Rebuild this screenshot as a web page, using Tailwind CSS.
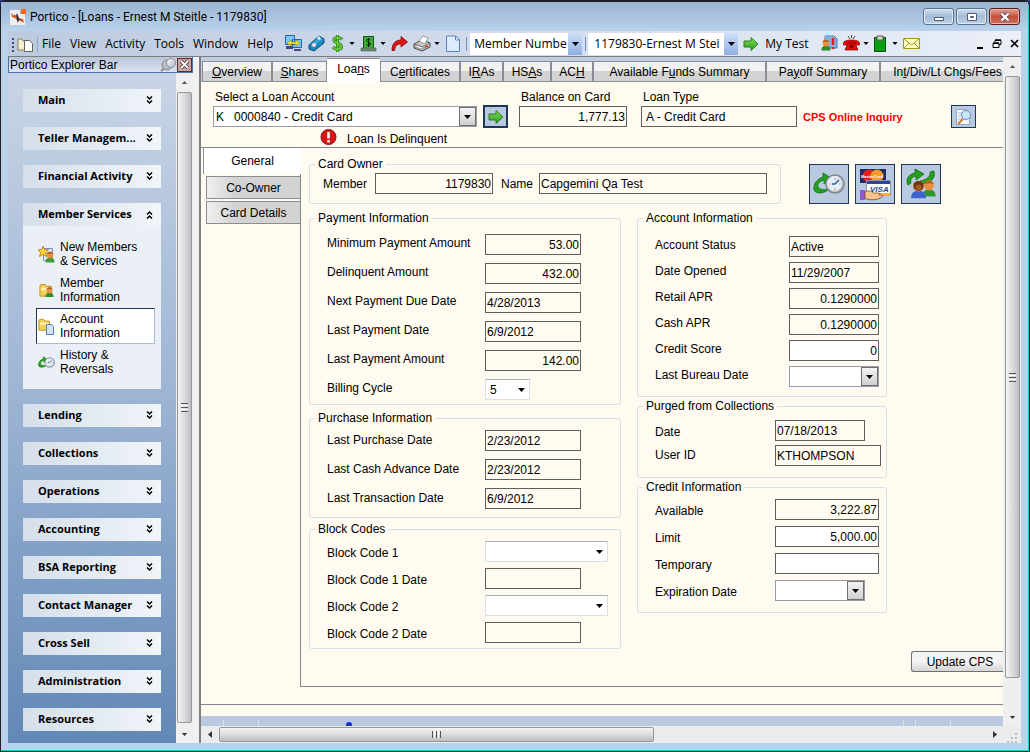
<!DOCTYPE html>
<html lang="en">
<head>
  <meta charset="UTF-8" />
  <meta name="viewport" content="width=device-width, initial-scale=1.0"/>
  <title>Portico - [Loans - Ernest M Steitle - 1179830]</title>
  <script src="https://cdn.jsdelivr.net/npm/@tailwindcss/browser@4"></script>
</head>
<body class="h-screen overflow-hidden bg-[#2b3580] font-['Liberation_Sans',Arial,sans-serif] text-xs text-black">

  <!-- Shared icons -->
  <svg class="absolute h-0 w-0">
    <defs>
      <linearGradient id="green" x1="0" y1="0" x2="0" y2="1"><stop offset="0" stop-color="#8be05a"/><stop offset="1" stop-color="#1f9a1c"/></linearGradient>
      <linearGradient id="face" x1="0" y1="0" x2="1" y2="1"><stop offset="0" stop-color="#fff"/><stop offset="1" stop-color="#a9b4bf"/></linearGradient>
    </defs>
    <symbol id="down" viewBox="0 0 7 4"><path d="M0 0h7L3.500 4z"/></symbol>
    <symbol id="chevrons" viewBox="0 0 7 9"><path d="M1 0.500l2.500 2.500L6 0.500M1 4.500l2.500 2.500L6 4.500" fill="none" stroke="#000" stroke-width="1.500"/></symbol>
    <symbol id="go" viewBox="0 0 16 16"><path d="M1 5h7V1.500l7 6.500-7 6.500V11H1z" fill="url(#green)" stroke="#2c7d22"/></symbol>
    <symbol id="person" viewBox="0 0 12 14"><path d="M0.500 13.500c0-4 2-5.500 5.500-5.500s5.500 1.500 5.500 5.500z"/><circle cx="6" cy="4.500" r="4" fill="#e8913c"/><path d="M2 3.500C3 0 9 0 10 3.500 8 2.500 4 2.500 2 3.500z" fill="#a8581c"/></symbol>
    <symbol id="folder" viewBox="0 0 16 16"><path d="M1 3.500V14h12V3.500H8L6.500 1.500H2z" fill="#f3cf57" stroke="#b98d1f"/><path d="M2 5h10v3H2z" fill="#fdf0a8"/></symbol>
    <symbol id="reversal" viewBox="0 0 32 24"><path d="M1 18C0 12 4 7 10 5V1l8 5-7 6V8c-4 1-7 4-6 7 2 3 6 3 11 2-3 4-13 6-15 1z" fill="#23a01f" stroke="#116b12" stroke-width=".8"/><circle cx="22" cy="12" r="9" fill="url(#face)" stroke="#7a8791" stroke-width="1.500"/><circle cx="22" cy="12" r="6.500" fill="#e4f0f8"/><path d="M22 6.500v1.500M22 16v1.500M16.500 12h1.500M26 12h1.500" stroke="#e07a50" stroke-width="1.200"/><path d="M22 12l4-4M22 12h-3" stroke="#245f96" stroke-width="1.500"/></symbol>
  </svg>

  <div class="flex h-full flex-col rounded-t-md border border-t-2 border-[#1d1f24] bg-[#b9d1ea]">
    <div class="flex min-h-0 flex-1 flex-col rounded-t-md border-r border-b border-[#1fc8e0]">

      <!-- Title bar -->
      <header class="flex h-[29px] shrink-0 items-center bg-linear-to-b from-[#99b4d1] to-[#bad2eb] pr-2 pl-2">
        <svg class="mr-1 ml-px h-4 w-4" viewBox="0 0 16 16"><path d="M0 1h10v4h5v11H0z" fill="#f1efec"/><path d="M3 5l3 2 1-3 2 5 4 4-4-2-1 3-2-5z" fill="#2e2e38"/><path d="M1 4l3 3 2-1 1 4-5-2zM9 9l4 1 1 4-3-2z" fill="#e2571e"/><path d="M11 0h5v5h-5z" fill="#ff6a00"/></svg>
        <h1 class="flex-1 font-[Roboto,sans-serif]">Portico - [Loans - Ernest M Steitle - 1179830]</h1>
        <div class="flex gap-[2px]">
          <button aria-label="Minimize" class="flex h-[17px] w-[31px] items-center justify-center rounded-[3px] border border-[#5b7491] bg-linear-to-b from-[#cfdeee] via-[#a5bcd6] to-[#bdd2e8] shadow-[inset_0_0_0_1px_#dfeaf5]">
            <svg class="h-4 w-4" viewBox="0 0 16 16"><path d="M3.500 8.500h9v3h-9z" fill="#fff" stroke="#53596b"/></svg>
          </button>
          <button aria-label="Maximize" class="flex h-[17px] w-[31px] items-center justify-center rounded-[3px] border border-[#5b7491] bg-linear-to-b from-[#cfdeee] via-[#a5bcd6] to-[#bdd2e8] shadow-[inset_0_0_0_1px_#dfeaf5]">
            <svg class="h-4 w-4" viewBox="0 0 16 16"><path d="M3.500 4.500h9v7h-9z" fill="#fff" stroke="#53596b"/><path d="M6.500 7.500h3v1h-3z" fill="#a5bcd6" stroke="#53596b"/></svg>
          </button>
          <button aria-label="Close" class="flex h-[17px] w-[31px] items-center justify-center rounded-[3px] border border-[#5a1e1a] bg-linear-to-b from-[#e0a398] via-[#c4503b] to-[#d0705a] shadow-[inset_0_0_0_1px_#e6b3aa]">
            <svg class="h-4 w-4" viewBox="0 0 16 16"><path d="M4.500 4.500l7 7M11.500 4.500l-7 7" stroke="#53596b" stroke-width="4"/><path d="M4.500 4.500l7 7M11.500 4.500l-7 7" stroke="#fff" stroke-width="2.200"/></svg>
          </button>
        </div>
      </header>

      <div class="mx-[7px] mb-[7px] flex min-h-0 flex-1 flex-col bg-[#f0f0f0]">

        <!-- Menu and toolbar -->
        <nav class="flex h-[26px] shrink-0 items-center border-b border-[#7c7c7c] bg-linear-to-r from-[#bccae0] to-[#eaeff8] pl-[3px] font-['Open_Sans',sans-serif] whitespace-nowrap">
          <svg class="h-4 w-7" viewBox="0 0 28 16"><path d="M1 2h2v2H1zM1 6h2v2H1zM1 10h2v2H1zM1 14h2v2H1z" fill="#31507f"/><path d="M7 3h4l1 2h4v9H7z" fill="#f4edd2" stroke="#8c8157"/><path d="M13.500 4.500h5l3 3v8h-8z" fill="#fff" stroke="#66625a"/><path d="M26.500 0v16" stroke="#8fa9cf"/></svg>
          <div class="flex gap-[9px] pl-[3px]">
            <button>File</button>
            <button>View</button>
            <button>Activity</button>
            <button>Tools</button>
            <button>Window</button>
            <button>Help</button>
          </div>
          <div class="flex items-center gap-[6px] pl-3">
            <button aria-label="Workstations"><svg class="h-[17px] w-[17px]" viewBox="0 0 17 17"><path d="M0.500 0.500h9v9h-9zM7.500 4.500h9v8h-9z" fill="#76c8f7" stroke="#2560b5"/><path d="M1 11h7v3H1zM9 14h7v2H9z" fill="#404b8c"/><path d="M2 8l4-3v2h5V5l4 3-4 3V9H6v2z" fill="#ffe22a" stroke="#8a7400" stroke-width=".5"/></svg></button>
            <button aria-label="Card reader"><svg class="h-[17px] w-[17px]" viewBox="0 0 17 17"><path d="M1 10L11 1l5 3v4L6 16l-5-2z" fill="#1b86b8" stroke="#0b4c74"/><path d="M2 10l9-8 4 2-9 8z" fill="#38a5d2"/><circle cx="6" cy="10" r="2" fill="#ffd6ee"/><path d="M9 3l2-2 2 3-2 1z" fill="#e8f6ff"/></svg></button>
            <button aria-label="Cash" class="ml-px flex items-center gap-[6px]"><svg class="h-[17px] w-[11px]" viewBox="0 0 11 17"><path d="M10 4.500C8 2 2 2 2 5c0 3.500 7.500 3 7.500 7 0 3-6 3-8.500 0M5.500 0v17" fill="none" stroke="#1d6f14" stroke-width="3"/><path d="M10 4.500C8 2 2 2 2 5c0 3.500 7.500 3 7.500 7 0 3-6 3-8.500 0M5.500 0v17" fill="none" stroke="#6dd13c" stroke-width="1.600"/></svg><svg class="h-[3px] w-[6px]"><use href="#down"/></svg></button>
            <button aria-label="Drawer" class="-ml-px flex items-center gap-[3px]"><svg class="h-[17px] w-[17px]" viewBox="0 0 17 17"><path d="M3.500 1.500h10v12h-10z" fill="#3fae3a" stroke="#14521a"/><path d="M1 13h15v3H1z" fill="#6d8b6e" stroke="#3c4d3d" stroke-width=".5"/><path d="M10.500 5C9 3.500 6.500 4 6.500 5.500c0 2 4 1.500 4 3.500S7.500 11 6.500 9.500M8.500 3v9" fill="none" stroke="#06220a"/></svg><svg class="h-[3px] w-[6px]"><use href="#down"/></svg></button>
            <button aria-label="Reverse" class="-ml-px"><svg class="h-[17px] w-[17px]" viewBox="0 0 17 17"><path d="M1 15.500C1 8 5 5 10 5V1.500l6.500 5.500L10 12V9c-4 0-6 2-6.500 6.500z" fill="#e01616" stroke="#7a0808" stroke-width=".8"/></svg></button>
            <button aria-label="Print" class="-ml-px flex items-center gap-[3px]"><svg class="h-[17px] w-[18px]" viewBox="0 0 18 17"><path d="M1 9l8-4 8 3v4l-8 4-8-3z" fill="#c9c9c5" stroke="#444"/><path d="M6 6l4-5 5 2-3 6z" fill="#fff" stroke="#777" stroke-width=".7"/><path d="M2 12l7 2 3-1-7-3z" fill="#fff" stroke="#666" stroke-width=".6"/><path d="M12 12l3-1" stroke="#e22" stroke-width="1.500"/><path d="M1 9l8 3 8-4" fill="none" stroke="#555" stroke-width=".6"/></svg><svg class="h-[3px] w-[6px]"><use href="#down"/></svg></button>
            <button aria-label="New document"><svg class="h-[17px] w-[14px]" viewBox="0 0 14 17"><path d="M0.500 1h9l4 4v11.500h-13z" fill="#dcebfd" stroke="#5b83bd"/><path d="M9.500 1v4h4z" fill="#fff" stroke="#5b83bd"/></svg></button>
            <span class="h-[14px] w-px bg-[#7394c8]"></span>
          </div>
          <div class="relative ml-[3px] h-[22px] w-[112px] bg-white">
            <select aria-label="Search by" class="h-full w-full appearance-none pl-1 outline-none"><option>Member Numbe</option></select>
            <span class="pointer-events-none absolute inset-y-0 right-0 flex w-[14px] items-center justify-center bg-linear-to-b from-[#cfdff7] to-[#8fb0e4]"><svg class="h-1 w-[7px]"><use href="#down"/></svg></span>
          </div>
          <span class="ml-[3px] h-[14px] w-px bg-[#7394c8]"></span>
          <div class="relative ml-[2px] h-[22px] w-[150px] bg-white">
            <select aria-label="Member" class="h-full w-full appearance-none pl-[6px] outline-none"><option>1179830-Ernest M Stei</option></select>
            <span class="pointer-events-none absolute inset-y-0 right-0 flex w-[14px] items-center justify-center bg-linear-to-b from-[#cfdff7] to-[#8fb0e4]"><svg class="h-1 w-[7px]"><use href="#down"/></svg></span>
          </div>
          <button aria-label="Go" class="ml-[5px]"><svg class="h-4 w-4"><use href="#go"/></svg></button>
          <button class="ml-[6px]">My Test</button>
          <div class="flex flex-1 items-center gap-[5px] pl-3">
            <button aria-label="Member alerts"><svg class="h-[17px] w-[17px]" viewBox="0 0 17 17"><path d="M4 1h9l3 3v9H4z" fill="#7fb4e6" stroke="#3f76b5"/><path d="M4 2h9" stroke="#e0a93a" stroke-width="2" stroke-dasharray="1"/><path d="M12 3v7M12 12v2" stroke="#e02020" stroke-width="2.500"/><g fill="#2f8a2c"><use href="#person" x="0" y="4" width="10" height="12"/></g></svg></button>
            <button aria-label="Phone" class="flex items-center gap-[3px]"><svg class="h-[17px] w-[17px]" viewBox="0 0 17 17"><path d="M0.500 8c0-4 16-4 16 0v2h-4V8h-8v2h-4z" fill="#e40d0d" stroke="#7d0000" stroke-width=".7"/><path d="M5 8h7l3 7H2z" fill="#e40d0d" stroke="#7d0000" stroke-width=".7"/><circle cx="8.500" cy="11.500" r="2" fill="#7d0000"/><path d="M5 1l2 3M8.500 0v3M12 1l-2 3" stroke="#222" stroke-width=".8"/></svg><svg class="h-[3px] w-[6px]"><use href="#down"/></svg></button>
            <button aria-label="Clipboard" class="flex items-center gap-[6px]"><svg class="h-[17px] w-[12px]" viewBox="0 0 12 17"><path d="M0.500 2.500h11v14H0.500z" fill="#0aa012" stroke="#0a4d0d"/><path d="M3 1h6v4H3z" fill="#d9d9c0" stroke="#555"/></svg><svg class="h-[3px] w-[6px]"><use href="#down"/></svg></button>
            <button aria-label="Mail"><svg class="h-[11px] w-[17px]" viewBox="0 0 17 11"><path d="M0.500 0.500h16v10h-16z" fill="#fffdc8" stroke="#a09a1c"/><path d="M1 1l7.500 6L16 1M1 10l5-5M16 10l-5-5" fill="none" stroke="#a09a1c"/></svg></button>
          </div>
          <div class="flex items-center gap-2 pr-[2px]">
            <button aria-label="Minimize loan window"><svg class="h-3 w-[7px]" viewBox="0 0 7 12"><path d="M0 9h6v2H0z"/></svg></button>
            <button aria-label="Restore loan window"><svg class="h-[10px] w-[10px]" viewBox="0 0 10 10"><path d="M3 3V1.500h6v4H7M1 4.500h6v4H1z" fill="none" stroke="#000"/><path d="M3 1h6M1 4h6" stroke="#000" stroke-width="1.500"/></svg></button>
            <button aria-label="Close loan window"><svg class="h-[9px] w-[9px]" viewBox="0 0 9 9"><path d="M1 1l7 7M8 1L1 8" stroke="#000" stroke-width="1.700"/></svg></button>
          </div>
        </nav>

        <div class="flex min-h-0 flex-1">

          <!-- Explorer bar -->
          <aside class="flex w-[185px] shrink-0 flex-col">
            <div class="flex h-4 shrink-0 items-center border border-t-0 border-[#4a76ad] bg-linear-to-b from-[#b9c5da] to-[#dbe3ef] pl-px">
              <h2 class="flex-1">Portico Explorer Bar</h2>
              <button aria-label="Pin"><svg class="h-[14px] w-4" viewBox="0 0 16 14"><path d="M1 13l5-4" stroke="#888" stroke-width="2"/><ellipse cx="7" cy="7" rx="5" ry="5" fill="#b9bcc2" stroke="#85888e"/><circle cx="11" cy="5" r="4.500" fill="url(#face)" stroke="#8b8e93"/></svg></button>
              <button aria-label="Close explorer bar" class="ml-px flex h-[14px] w-[15px] items-center justify-center border border-[#5f2b2b] bg-[#c9a3a3]"><svg class="h-[9px] w-[9px]" viewBox="0 0 9 9"><path d="M1 1l7 7M8 1L1 8" stroke="#3d2020" stroke-width="3.500"/><path d="M1 1l7 7M8 1L1 8" stroke="#fff" stroke-width="2"/></svg></button>
            </div>
            <div class="flex min-h-0 flex-1">
              <div class="flex flex-1 flex-col gap-[15px] bg-linear-to-b from-[#c8d5e6] via-[#9bb3d3] via-50% to-[#6288b6] pt-4 pr-[15px] pl-[15px] font-['Open_Sans',sans-serif] text-[11px] font-bold">
                <button class="flex h-[23px] w-full shrink-0 items-center justify-between bg-linear-to-r from-[#d5dfea] to-[#f1f5fa] pr-2 pl-[15px]">Main <svg class="h-[9px] w-[7px]"><use href="#chevrons"/></svg></button>
                <button class="flex h-[23px] w-full shrink-0 items-center justify-between bg-linear-to-r from-[#d5dfea] to-[#f1f5fa] pr-2 pl-[15px]">Teller Managem... <svg class="h-[9px] w-[7px]"><use href="#chevrons"/></svg></button>
                <button class="flex h-[23px] w-full shrink-0 items-center justify-between bg-linear-to-r from-[#d5dfea] to-[#f1f5fa] pr-2 pl-[15px]">Financial Activity <svg class="h-[9px] w-[7px]"><use href="#chevrons"/></svg></button>
                <div class="shrink-0">
                  <button class="flex h-[23px] w-full items-center justify-between bg-linear-to-r from-[#d5dfea] to-[#f1f5fa] pr-2 pl-[15px]">Member Services <svg class="h-[9px] w-[7px] rotate-180"><use href="#chevrons"/></svg></button>
                  <div class="h-[163px] bg-[#eaf0f5] px-[6px] pt-[10px] pl-[13px] font-['Liberation_Sans',Arial,sans-serif] text-xs leading-[14px] font-normal">
                    <a href="#" class="flex h-9 items-center border border-transparent">
                      <svg class="mr-[5px] ml-px h-[17px] w-[17px]" viewBox="0 0 17 17"><path d="M5.500 2.500h9v12h-9z" fill="#dbe9f8" stroke="#7390b4"/><g fill="#3f9a34"><use href="#person" x="7" y="5" width="10" height="12"/></g><path d="M5 0l1.500 3.500 4 .3-3 2.700 1 4L5 8.300 1.500 10.500l1-4-2.500-2.700 3.500-.3z" fill="#ffd53e" stroke="#a87a0c" stroke-width=".8"/></svg>
                      <span>New Members<br>&amp; Services</span>
                    </a>
                    <a href="#" class="flex h-9 items-center border border-transparent">
                      <svg class="mr-[5px] ml-px h-[17px] w-[17px]" viewBox="0 0 17 17"><use href="#folder" x="1" y="1" width="15" height="15"/><g fill="#2f8f2c"><use href="#person" x="7" y="4" width="9" height="12"/></g></svg>
                      <span>Member<br>Information</span>
                    </a>
                    <a href="#" class="flex h-9 items-center border border-t-[#22344f] border-r-[#a9bcd6] border-b-[#a9bcd6] border-l-[#22344f] bg-white">
                      <svg class="mr-[5px] ml-px h-[17px] w-[17px]" viewBox="0 0 17 17"><use href="#folder" x="0" y="0" width="14" height="14"/><path d="M8.500 6.500h5l2 2v8h-7z" fill="#cfe4fa" stroke="#557fb5"/></svg>
                      <span>Account<br>Information</span>
                    </a>
                    <a href="#" class="flex h-9 items-center border border-transparent">
                      <svg class="mr-[5px] ml-px h-[17px] w-[17px]"><use href="#reversal"/></svg>
                      <span>History &amp;<br>Reversals</span>
                    </a>
                  </div>
                </div>
                <button class="flex h-[23px] w-full shrink-0 items-center justify-between bg-linear-to-r from-[#d5dfea] to-[#f1f5fa] pr-2 pl-[15px]">Lending <svg class="h-[9px] w-[7px]"><use href="#chevrons"/></svg></button>
                <button class="flex h-[23px] w-full shrink-0 items-center justify-between bg-linear-to-r from-[#d5dfea] to-[#f1f5fa] pr-2 pl-[15px]">Collections <svg class="h-[9px] w-[7px]"><use href="#chevrons"/></svg></button>
                <button class="flex h-[23px] w-full shrink-0 items-center justify-between bg-linear-to-r from-[#d5dfea] to-[#f1f5fa] pr-2 pl-[15px]">Operations <svg class="h-[9px] w-[7px]"><use href="#chevrons"/></svg></button>
                <button class="flex h-[23px] w-full shrink-0 items-center justify-between bg-linear-to-r from-[#d5dfea] to-[#f1f5fa] pr-2 pl-[15px]">Accounting <svg class="h-[9px] w-[7px]"><use href="#chevrons"/></svg></button>
                <button class="flex h-[23px] w-full shrink-0 items-center justify-between bg-linear-to-r from-[#d5dfea] to-[#f1f5fa] pr-2 pl-[15px]">BSA Reporting <svg class="h-[9px] w-[7px]"><use href="#chevrons"/></svg></button>
                <button class="flex h-[23px] w-full shrink-0 items-center justify-between bg-linear-to-r from-[#d5dfea] to-[#f1f5fa] pr-2 pl-[15px]">Contact Manager <svg class="h-[9px] w-[7px]"><use href="#chevrons"/></svg></button>
                <button class="flex h-[23px] w-full shrink-0 items-center justify-between bg-linear-to-r from-[#d5dfea] to-[#f1f5fa] pr-2 pl-[15px]">Cross Sell <svg class="h-[9px] w-[7px]"><use href="#chevrons"/></svg></button>
                <button class="flex h-[23px] w-full shrink-0 items-center justify-between bg-linear-to-r from-[#d5dfea] to-[#f1f5fa] pr-2 pl-[15px]">Administration <svg class="h-[9px] w-[7px]"><use href="#chevrons"/></svg></button>
                <button class="flex h-[23px] w-full shrink-0 items-center justify-between bg-linear-to-r from-[#d5dfea] to-[#f1f5fa] pr-2 pl-[15px]">Resources <svg class="h-[9px] w-[7px]"><use href="#chevrons"/></svg></button>
              </div>
              <!-- Explorer scrollbar -->
              <div class="flex w-[17px] flex-col items-center bg-[#efefef]">
                <svg class="my-2 h-[3px] w-[7px] rotate-180 fill-[#555]"><use href="#down"/></svg>
                <div class="flex w-[15px] flex-1 flex-col items-center justify-center gap-px rounded-[2px] border border-[#979797] bg-linear-to-r from-[#f4f4f4] via-[#dcdcde] to-[#bdbdc3]">
                  <span class="h-px w-[7px] bg-[#555]"></span><span class="h-px w-[7px] bg-white"></span><span class="h-px w-[7px] bg-[#555]"></span><span class="h-px w-[7px] bg-white"></span><span class="h-px w-[7px] bg-[#555]"></span>
                </div>
                <svg class="mt-[10px] mb-[7px] h-[3px] w-[7px] fill-[#333]"><use href="#down"/></svg>
              </div>
            </div>
          </aside>

          <!-- Loan window -->
          <main class="ml-[6px] flex min-w-0 flex-1 flex-col border-l-2 border-[#7f7f7f]">
            <div class="flex min-h-0 flex-1">
              <div class="flex min-w-0 flex-1 flex-col overflow-hidden">

                <!-- Account type tabs -->
                <div role="tablist" class="flex h-[25px] shrink-0 items-end overflow-hidden bg-[#c3cde0] pl-px whitespace-nowrap">
                  <button role="tab" class="h-[21px] w-[71px] shrink-0 border border-r-2 border-[#8a8c96] bg-linear-to-b from-[#f2f2f2] from-50% to-[#d3d3d3] to-50%"><u>O</u>verview</button>
                  <button role="tab" class="h-[21px] w-[54px] shrink-0 border border-l-0 border-[#8a8c96] bg-linear-to-b from-[#f2f2f2] from-50% to-[#d3d3d3] to-50%"><u>S</u>hares</button>
                  <button role="tab" aria-selected="true" class="h-6 w-[53px] shrink-0 border-t border-[#8a8c96] bg-white pb-1">Loa<u>n</u>s</button>
                  <button role="tab" class="h-[21px] w-[81px] shrink-0 border border-r-2 border-[#8a8c96] bg-linear-to-b from-[#f2f2f2] from-50% to-[#d3d3d3] to-50%">C<u>e</u>rtificates</button>
                  <button role="tab" class="h-[21px] w-[43px] shrink-0 border border-r-2 border-l-0 border-[#8a8c96] bg-linear-to-b from-[#f2f2f2] from-50% to-[#d3d3d3] to-50%">I<u>R</u>As</button>
                  <button role="tab" class="h-[21px] w-[48px] shrink-0 border border-r-2 border-l-0 border-[#8a8c96] bg-linear-to-b from-[#f2f2f2] from-50% to-[#d3d3d3] to-50%">HS<u>A</u>s</button>
                  <button role="tab" class="h-[21px] w-[42px] shrink-0 border border-r-2 border-l-0 border-[#8a8c96] bg-linear-to-b from-[#f2f2f2] from-50% to-[#d3d3d3] to-50%">AC<u>H</u></button>
                  <button role="tab" class="h-[21px] w-[173px] shrink-0 border border-r-2 border-l-0 border-[#8a8c96] bg-linear-to-b from-[#f2f2f2] from-50% to-[#d3d3d3] to-50%">Available F<u>u</u>nds Summary</button>
                  <button role="tab" class="h-[21px] w-[114px] shrink-0 border border-r-2 border-l-0 border-[#8a8c96] bg-linear-to-b from-[#f2f2f2] from-50% to-[#d3d3d3] to-50%">Pa<u>y</u>off Summary</button>
                  <button role="tab" class="h-[21px] w-[134px] shrink-0 border border-l-0 border-[#8a8c96] bg-linear-to-b from-[#f2f2f2] from-50% to-[#d3d3d3] to-50%">In<u>t</u>/Div/Lt Chgs/Fees</button>
                </div>

                <div class="flex min-h-0 flex-1 flex-col bg-[#fffbf0]">
                  <div class="mb-[11px] flex min-h-0 flex-1 flex-col border-b border-[#85858f]">

                    <!-- Loan header -->
                    <div class="flex shrink-0 items-end pt-[6px] pl-3">
                      <div class="w-[264px]">
                        <label for="loan" class="block pl-[2px] leading-[18px]">Select a Loan Account</label>
                        <div class="relative h-[21px] border border-[#9a9ca3] bg-white">
                          <select id="loan" class="h-full w-full appearance-none pl-[2px] outline-none"><option>K&nbsp;&nbsp; 0000840 - Credit Card</option></select>
                          <span class="pointer-events-none absolute inset-y-0 right-0 flex w-[17px] items-center justify-center border border-[#6f6f6f] bg-linear-to-b from-[#f4f4f4] to-[#d0d0d0]"><svg class="h-1 w-[7px]"><use href="#down"/></svg></span>
                        </div>
                      </div>
                      <button aria-label="Open loan" class="-mb-px ml-[6px] flex h-[23px] w-[25px] items-center justify-center border-2 border-[#1f3656] bg-[#b9c9df]"><svg class="h-4 w-4"><use href="#go"/></svg></button>
                      <div class="ml-[11px] w-[108px]">
                        <label for="balance" class="block pl-[2px] leading-[18px]">Balance on Card</label>
                        <input id="balance" value="1,777.13" class="block h-[21px] w-full border border-[#5f5f5f] px-px text-right outline-none" />
                      </div>
                      <div class="ml-[14px] w-[156px]">
                        <label for="type" class="block pl-[2px] leading-[18px]">Loan Type</label>
                        <input id="type" value="A - Credit Card" class="block h-[21px] w-full border border-[#5f5f5f] px-1 outline-none" />
                      </div>
                      <a href="#" class="ml-[6px] flex-1 pb-[2px] text-[11px] font-bold text-[#f00]">CPS Online Inquiry</a>
                      <button aria-label="Inquiry" class="-mb-px mr-[27px] flex h-[23px] w-[25px] items-center justify-center border border-[#1f3656] bg-[#b9c9df]">
                        <svg class="h-[18px] w-[18px]" viewBox="0 0 18 18"><path d="M1.500 1.500h10l3 3v12h-13z" fill="#f4f8fd" stroke="#8fa6c8"/><path d="M3 5h5M3 8h4M3 11h6" stroke="#9fb2cf"/><path d="M3 16l5-5" stroke="#d7792a" stroke-width="2"/><circle cx="11" cy="7" r="4.500" fill="#c9e5fb" stroke="#6b93c2"/></svg>
                      </button>
                    </div>
                    <div class="flex h-[21px] shrink-0 items-center border-b border-[#85858f] pt-1 pl-[119px]">
                      <svg class="mr-[10px] mb-px h-[17px] w-[17px] self-end" viewBox="0 0 17 17"><circle cx="8.500" cy="8" r="7.500" fill="#d81515" stroke="#8a0a0a"/><path d="M8.500 3v6.500M8.500 11v2.500" stroke="#fff" stroke-width="2.500"/></svg>
                      <span>Loan Is Delinquent</span>
                    </div>

                    <div class="flex min-h-0 flex-1 pb-[17px]">
                      <!-- Detail tabs -->
                      <div role="tablist" aria-orientation="vertical" class="flex w-[99px] shrink-0 flex-col pl-[2px]">
                        <button role="tab" aria-selected="true" class="relative z-10 -mr-px mb-[2px] h-[26px] shrink-0 border-l border-[#8a8c96] bg-white">General</button>
                        <button role="tab" class="mb-[2px] ml-[3px] h-[23px] shrink-0 border border-r-0 border-[#8a8c96] bg-linear-to-r from-[#f0f0f0] to-[#d3d3d3] to-30%">Co-Owner</button>
                        <button role="tab" class="ml-[3px] h-[23px] shrink-0 border border-r-0 border-[#8a8c96] bg-linear-to-r from-[#f0f0f0] to-[#d3d3d3] to-30%">Card Details</button>
                      </div>

                      <div class="flex min-w-0 flex-1 flex-col border-b border-l border-[#85858f] pt-[7px] pl-2">
                        <div class="flex shrink-0 items-end">
                          <fieldset class="w-[472px] rounded-[3px] border border-[#d3dfea] pb-[9px] pl-[5px]">
                            <legend class="px-[3px] leading-[18px]">Card Owner</legend>
                            <div class="flex items-center pl-2">
                              <label for="member" class="w-[52px]">Member</label>
                              <input id="member" value="1179830" class="h-[21px] w-[118px] border border-[#5f5f5f] px-px text-right outline-none" />
                              <label for="name" class="w-[46px] pl-2">Name</label>
                              <input id="name" value="Capgemini Qa Test" class="h-[21px] w-[228px] border border-[#5f5f5f] px-px outline-none" />
                            </div>
                          </fieldset>
                          <div class="ml-7 flex shrink-0 gap-[6px]">
                            <button aria-label="Payment history" class="flex h-10 w-10 items-center justify-center border border-[#1f3656] bg-[#b9c9df]"><svg class="h-6 w-8"><use href="#reversal"/></svg></button>
                            <button aria-label="Card services" class="flex h-10 w-10 items-center justify-center border border-[#1f3656] bg-[#b9c9df]">
                              <svg class="h-[34px] w-[34px]" viewBox="0 0 34 34"><path d="M2 2h26v14H2z" fill="#1d2a6b"/><circle cx="11" cy="9" r="6.500" fill="#e3201b"/><circle cx="19" cy="9" r="6.500" fill="#f4992a"/><text x="3" y="11" font-size="4" font-weight="bold" fill="#fff">MasterCard</text><path d="M8.500 13.500h24v15h-24z" fill="#fff" stroke="#8d97a8"/><path d="M9 14h23v3H9z" fill="#27479b"/><path d="M9 26h23v3H9z" fill="#eeb22e"/><text x="12" y="24.500" font-size="8" font-weight="bold" font-style="italic" fill="#1d3f94">VISA</text><path d="M2 23h5v10H2z" fill="#8d5bd8"/><path d="M7 25c4-2 6-1 8 1h6c2 1 1 2 0 2 3 0 5 1 3 2-4 3-13 4-17 1z" fill="#f7c48b" stroke="#7a4a1a" stroke-width=".8"/></svg>
                            </button>
                            <button aria-label="Joint owners" class="flex h-10 w-10 items-center justify-center border border-[#1f3656] bg-[#b9c9df]">
                              <svg class="h-[34px] w-[34px]" viewBox="0 0 34 34"><path d="M4 18C1 12 5 7 11 6V2l9 5-8 6V9c-4 1-6 3-5 7zM16 14c7-1 11-5 10-9l4-1c2 7-4 13-12 13z" fill="#23a01f" stroke="#116b12" stroke-width=".8"/><g fill="#2f9a2c"><use href="#person" x="17" y="13" width="16" height="17"/></g><g fill="#3e63d0"><use href="#person" x="6" y="13" width="17" height="19"/></g><circle cx="14.500" cy="19" r="5" fill="#6b3413"/><circle cx="14.500" cy="20.500" r="3" fill="#a85a24"/></svg>
                            </button>
                          </div>
                        </div>

                        <div class="mt-[5px] flex shrink-0 items-start gap-4">
                          <!-- Left column -->
                          <div class="w-[312px] shrink-0">
                            <fieldset class="rounded-[3px] border border-[#d3dfea] pb-1 pl-[5px]">
                              <legend class="px-[3px] leading-[18px]">Payment Information</legend>
                              <div class="grid grid-cols-[158px_auto] justify-start gap-y-2 pt-[7px] pl-3">
                                <label for="minimum" class="leading-[18px]">Minimum Payment Amount</label>
                                <input id="minimum" value="53.00" class="h-[21px] w-24 border border-[#5f5f5f] px-px text-right outline-none" />
                                <label for="delinquent" class="leading-[18px]">Delinquent Amount</label>
                                <input id="delinquent" value="432.00" class="h-[21px] w-24 border border-[#5f5f5f] px-px text-right outline-none" />
                                <label for="next-due" class="leading-[18px]">Next Payment Due Date</label>
                                <input id="next-due" value="4/28/2013" class="h-[21px] w-24 border border-[#5f5f5f] px-px outline-none" />
                                <label for="last-payment" class="leading-[18px]">Last Payment Date</label>
                                <input id="last-payment" value="6/9/2012" class="h-[21px] w-24 border border-[#5f5f5f] px-px outline-none" />
                                <label for="last-amount" class="leading-[18px]">Last Payment Amount</label>
                                <input id="last-amount" value="142.00" class="h-[21px] w-24 border border-[#5f5f5f] px-px text-right outline-none" />
                                <label for="cycle" class="leading-[18px]">Billing Cycle</label>
                                <div class="relative h-[21px] w-[45px] border border-[#dadfe6] border-t-[#abadb3] bg-white">
                                  <select id="cycle" class="h-full w-full appearance-none pl-1 outline-none"><option>5</option></select>
                                  <svg class="pointer-events-none absolute top-2 right-[4px] h-1 w-[7px]"><use href="#down"/></svg>
                                </div>
                              </div>
                            </fieldset>

                            <fieldset class="mt-1 rounded-[3px] border border-[#d3dfea] pb-2 pl-[5px]">
                              <legend class="px-[3px] leading-[18px]">Purchase Information</legend>
                              <div class="grid grid-cols-[158px_auto] justify-start gap-y-2 pt-[3px] pl-3">
                                <label for="purchase" class="leading-[21px]">Last Purchase Date</label>
                                <input id="purchase" value="2/23/2012" class="h-[21px] w-24 border border-[#5f5f5f] px-px outline-none" />
                                <label for="advance" class="leading-[21px]">Last Cash Advance Date</label>
                                <input id="advance" value="2/23/2012" class="h-[21px] w-24 border border-[#5f5f5f] px-px outline-none" />
                                <label for="transaction" class="leading-[21px]">Last Transaction Date</label>
                                <input id="transaction" value="6/9/2012" class="h-[21px] w-24 border border-[#5f5f5f] px-px outline-none" />
                              </div>
                            </fieldset>

                            <fieldset class="mt-[2px] rounded-[3px] border border-[#d3dfea] pb-[5px] pl-[5px]">
                              <legend class="px-[3px] leading-[18px]">Block Codes</legend>
                              <div class="grid grid-cols-[158px_auto] justify-start gap-y-[6px] pt-[3px] pl-3">
                                <label for="code-1" class="h-[21px] leading-[25px]">Block Code 1</label>
                                <div class="relative h-[21px] w-[123px] border border-[#dadfe6] border-t-[#abadb3] bg-white">
                                  <select id="code-1" class="h-full w-full appearance-none pl-1 outline-none"><option></option></select>
                                  <svg class="pointer-events-none absolute top-2 right-[4px] h-1 w-[7px]"><use href="#down"/></svg>
                                </div>
                                <label for="code-1-date" class="h-[21px] leading-[25px]">Block Code 1 Date</label>
                                <input id="code-1-date" class="h-[21px] w-24 border border-[#5f5f5f] px-px outline-none" />
                                <label for="code-2" class="h-[21px] leading-[25px]">Block Code 2</label>
                                <div class="relative h-[21px] w-[123px] border border-[#dadfe6] border-t-[#abadb3] bg-white">
                                  <select id="code-2" class="h-full w-full appearance-none pl-1 outline-none"><option></option></select>
                                  <svg class="pointer-events-none absolute top-2 right-[4px] h-1 w-[7px]"><use href="#down"/></svg>
                                </div>
                                <label for="code-2-date" class="h-[21px] leading-[25px]">Block Code 2 Date</label>
                                <input id="code-2-date" class="h-[21px] w-24 border border-[#5f5f5f] px-px outline-none" />
                              </div>
                            </fieldset>
                          </div>

                          <!-- Right column -->
                          <div class="w-[250px] shrink-0">
                            <fieldset class="rounded-[3px] border border-[#d3dfea] pb-[9px] pl-[5px]">
                              <legend class="px-[3px] leading-[18px]">Account Information</legend>
                              <div class="grid grid-cols-[134px_auto] justify-start gap-y-[5px] pt-[9px] pl-3">
                                <label for="status" class="leading-[18px]">Account Status</label>
                                <input id="status" value="Active" class="h-[21px] w-[90px] border border-[#5f5f5f] px-px outline-none" />
                                <label for="opened" class="leading-[18px]">Date Opened</label>
                                <input id="opened" value="11/29/2007" class="h-[21px] w-[90px] border border-[#5f5f5f] px-px outline-none" />
                                <label for="retail" class="leading-[18px]">Retail APR</label>
                                <input id="retail" value="0.1290000" class="h-[21px] w-[90px] border border-[#5f5f5f] px-px text-right outline-none" />
                                <label for="cash" class="leading-[18px]">Cash APR</label>
                                <input id="cash" value="0.1290000" class="h-[21px] w-[90px] border border-[#5f5f5f] px-px text-right outline-none" />
                                <label for="score" class="leading-[18px]">Credit Score</label>
                                <input id="score" value="0" class="h-[21px] w-[90px] border border-[#5f5f5f] bg-white px-px text-right outline-none" />
                                <label for="bureau" class="leading-[18px]">Last Bureau Date</label>
                                <div class="relative h-[21px] w-[90px] border border-[#9a9ca3] bg-white">
                                  <select id="bureau" class="h-full w-full appearance-none outline-none"><option></option></select>
                                  <span class="pointer-events-none absolute inset-y-0 right-0 flex w-[17px] items-center justify-center border border-[#6f6f6f] bg-linear-to-b from-[#f4f4f4] to-[#d0d0d0]"><svg class="h-1 w-[7px]"><use href="#down"/></svg></span>
                                </div>
                              </div>
                            </fieldset>

                            <fieldset class="rounded-[3px] border border-[#d3dfea] pb-[11px] pl-[5px]">
                              <legend class="px-[3px] leading-[18px]">Purged from Collections</legend>
                              <div class="grid grid-cols-[120px_auto] justify-start gap-y-1 pt-[5px] pl-3">
                                <label for="purged" class="h-[21px] leading-[25px]">Date</label>
                                <input id="purged" value="07/18/2013" class="h-[21px] w-[90px] border border-[#5f5f5f] px-px outline-none" />
                                <label for="user" class="leading-[21px]">User ID</label>
                                <input id="user" value="KTHOMPSON" class="h-[21px] w-[106px] border border-[#5f5f5f] px-px outline-none" />
                              </div>
                            </fieldset>

                            <fieldset class="rounded-[3px] border border-[#d3dfea] pb-[11px] pl-[5px]">
                              <legend class="px-[3px] leading-[18px]">Credit Information</legend>
                              <div class="grid grid-cols-[120px_auto] justify-start gap-y-[6px] pt-[3px] pl-3">
                                <label for="available" class="h-[21px] leading-[25px]">Available</label>
                                <input id="available" value="3,222.87" class="h-[21px] w-[104px] border border-[#5f5f5f] px-px text-right outline-none" />
                                <label for="limit" class="h-[21px] leading-[25px]">Limit</label>
                                <input id="limit" value="5,000.00" class="h-[21px] w-[104px] border border-[#5f5f5f] bg-white px-px text-right outline-none" />
                                <label for="temporary" class="h-[21px] leading-[25px]">Temporary</label>
                                <input id="temporary" class="h-[21px] w-[104px] border border-[#5f5f5f] bg-white px-px outline-none" />
                                <label for="expiration" class="h-[21px] leading-[25px]">Expiration Date</label>
                                <div class="relative h-[21px] w-[90px] border border-[#9a9ca3] bg-white">
                                  <select id="expiration" class="h-full w-full appearance-none outline-none"><option></option></select>
                                  <span class="pointer-events-none absolute inset-y-0 right-0 flex w-[17px] items-center justify-center border border-[#6f6f6f] bg-linear-to-b from-[#f4f4f4] to-[#d0d0d0]"><svg class="h-1 w-[7px]"><use href="#down"/></svg></span>
                                </div>
                              </div>
                            </fieldset>
                          </div>
                        </div>

                        <button class="mt-[2px] h-[21px] w-[92px] shrink-0 self-end rounded-l-[3px] border border-r-0 border-[#707070] bg-linear-to-b from-[#f3f3f3] from-50% to-[#d5d5d5] pl-[5px]">Update CPS</button>
                      </div>
                    </div>
                  </div>
                </div>

                <!-- Status strip -->
                <div class="flex h-[10px] shrink-0 items-end bg-[#b9c9df]">
                  <span class="ml-[22px] h-[6px] w-px bg-[#dfe3e8]"></span>
                  <span class="ml-[34px] h-[6px] w-px bg-[#dfe3e8]"></span>
                  <span class="ml-[87px] h-1 w-[6px] rounded-t-full bg-[#1433c4]"></span>
                  <span class="ml-auto h-[6px] w-px bg-[#dfe3e8]"></span>
                  <span class="ml-[11px] h-[6px] w-px bg-[#dfe3e8]"></span>
                  <span class="mr-[52px] ml-[34px] h-[6px] w-px bg-[#dfe3e8]"></span>
                </div>
              </div>

              <!-- Vertical scrollbar -->
              <div class="flex w-[18px] shrink-0 flex-col items-center bg-[#efefef]">
                <svg class="my-2 h-[3px] w-[7px] rotate-180 fill-[#555]"><use href="#down"/></svg>
                <div class="flex w-[15px] flex-1 flex-col items-center justify-center gap-px rounded-[2px] border border-[#979797] bg-linear-to-r from-[#f4f4f4] via-[#dcdcde] to-[#bdbdc3]">
                  <span class="h-px w-[7px] bg-[#555]"></span><span class="h-px w-[7px] bg-white"></span><span class="h-px w-[7px] bg-[#555]"></span><span class="h-px w-[7px] bg-white"></span><span class="h-px w-[7px] bg-[#555]"></span>
                </div>
                <svg class="mt-[38px] mb-[7px] h-[3px] w-[7px] fill-[#333]"><use href="#down"/></svg>
              </div>
            </div>

            <!-- Horizontal scrollbar -->
            <div class="flex h-[17px] shrink-0 items-center bg-[#ececec]">
              <svg class="mx-[7px] h-[7px] w-1" viewBox="0 0 4 7"><path d="M4 0v7L0 3.500z" fill="#333"/></svg>
              <div class="flex h-[15px] w-[53%] items-center justify-center gap-px rounded-[2px] border border-[#979797] bg-linear-to-b from-[#f4f4f4] via-[#dcdcde] to-[#bdbdc3]">
                <span class="h-[7px] w-px bg-[#555]"></span><span class="h-[7px] w-px bg-white"></span><span class="h-[7px] w-px bg-[#555]"></span><span class="h-[7px] w-px bg-white"></span><span class="h-[7px] w-px bg-[#555]"></span>
              </div>
              <svg class="mr-[6px] ml-auto h-[7px] w-1" viewBox="0 0 4 7"><path d="M0 0v7l4-3.500z" fill="#333"/></svg>
              <svg class="h-[17px] w-[18px]" viewBox="0 0 18 17"><path d="M12 7h2v2h-2zM8 11h2v2H8zM12 11h2v2h-2zM4 15h2v2H4zM8 15h2v2H8zM12 15h2v2h-2z" fill="#bcbcbc"/></svg>
            </div>
          </main>
        </div>
      </div>
    </div>
  </div>
</body>
</html>
